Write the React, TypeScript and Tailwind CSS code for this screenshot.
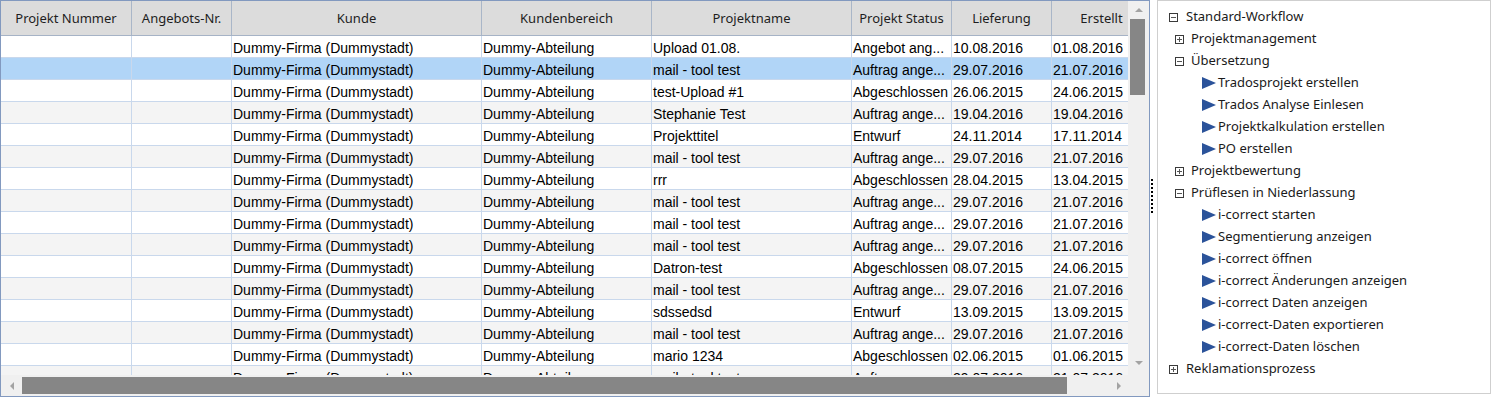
import React from "react";

interface Row {
  name: string;
  status: string;
  lieferung: string;
  erstellt: string;
}

const AT = "Auftrag ange...";

const rows: Row[] = [
  { name: "Upload 01.08.", status: "Angebot ang...", lieferung: "10.08.2016", erstellt: "01.08.2016" },
  { name: "mail - tool test", status: AT, lieferung: "29.07.2016", erstellt: "21.07.2016" },
  { name: "test-Upload #1", status: "Abgeschlossen", lieferung: "26.06.2015", erstellt: "24.06.2015" },
  { name: "Stephanie Test", status: AT, lieferung: "19.04.2016", erstellt: "19.04.2016" },
  { name: "Projekttitel", status: "Entwurf", lieferung: "24.11.2014", erstellt: "17.11.2014" },
  { name: "mail - tool test", status: AT, lieferung: "29.07.2016", erstellt: "21.07.2016" },
  { name: "rrr", status: "Abgeschlossen", lieferung: "28.04.2015", erstellt: "13.04.2015" },
  { name: "mail - tool test", status: AT, lieferung: "29.07.2016", erstellt: "21.07.2016" },
  { name: "mail - tool test", status: AT, lieferung: "29.07.2016", erstellt: "21.07.2016" },
  { name: "mail - tool test", status: AT, lieferung: "29.07.2016", erstellt: "21.07.2016" },
  { name: "Datron-test", status: "Abgeschlossen", lieferung: "08.07.2015", erstellt: "24.06.2015" },
  { name: "mail - tool test", status: AT, lieferung: "29.07.2016", erstellt: "21.07.2016" },
  { name: "sdssedsd", status: "Entwurf", lieferung: "13.09.2015", erstellt: "13.09.2015" },
  { name: "mail - tool test", status: AT, lieferung: "29.07.2016", erstellt: "21.07.2016" },
  { name: "mario 1234", status: "Abgeschlossen", lieferung: "02.06.2015", erstellt: "01.06.2015" },
  { name: "mail - tool test", status: AT, lieferung: "29.07.2016", erstellt: "21.07.2016" },
];

const headers = [
  "Projekt Nummer",
  "Angebots-Nr.",
  "Kunde",
  "Kundenbereich",
  "Projektname",
  "Projekt Status",
  "Lieferung",
  "Erstellt",
];

const cols = "grid grid-cols-[131px_100px_250px_170px_200px_100px_100px_100px]";

type TreeNode =
  | { kind: "box"; level: 0 | 1; open: boolean; label: string }
  | { kind: "step"; label: string };

const tree: TreeNode[] = [
  { kind: "box", level: 0, open: true, label: "Standard-Workflow" },
  { kind: "box", level: 1, open: false, label: "Projektmanagement" },
  { kind: "box", level: 1, open: true, label: "Übersetzung" },
  { kind: "step", label: "Tradosprojekt erstellen" },
  { kind: "step", label: "Trados Analyse Einlesen" },
  { kind: "step", label: "Projektkalkulation erstellen" },
  { kind: "step", label: "PO erstellen" },
  { kind: "box", level: 1, open: false, label: "Projektbewertung" },
  { kind: "box", level: 1, open: true, label: "Prüflesen in Niederlassung" },
  { kind: "step", label: "i-correct starten" },
  { kind: "step", label: "Segmentierung anzeigen" },
  { kind: "step", label: "i-correct öffnen" },
  { kind: "step", label: "i-correct Änderungen anzeigen" },
  { kind: "step", label: "i-correct Daten anzeigen" },
  { kind: "step", label: "i-correct-Daten exportieren" },
  { kind: "step", label: "i-correct-Daten löschen" },
  { kind: "box", level: 0, open: false, label: "Reklamationsprozess" },
];

function ExpandBox({ open }: { open: boolean }) {
  return (
    <div className="relative h-[9px] w-[9px] border border-[#3a3a3a] bg-white">
      <div className="absolute left-[1px] top-[3px] h-px w-[5px] bg-[#555]" />
      {!open && <div className="absolute left-[3px] top-[1px] h-[5px] w-px bg-[#555]" />}
    </div>
  );
}

function Cell({ children, last }: { children?: React.ReactNode; last?: boolean }) {
  return (
    <div
      className={
        "flex items-center overflow-hidden whitespace-nowrap pl-[1px] pt-[3px] " +
        (last ? "" : "border-r border-[#c9d8ec]")
      }
    >
      {children}
    </div>
  );
}

export default function App() {
  return (
    <div className="flex h-[398px] w-[1491px] bg-white">
      {/* grid */}
      <div className="flex h-[397px] w-[1150px] flex-col border border-[#8299bf]">
        <div className="flex h-[374px]">
          <div className="w-[1127px] overflow-hidden">
            <div
              className={cols + " h-[35px] w-max border-b border-[#a6b3c6] bg-[#dcdcdc] text-[13px] text-[#1e1e1e]"}
              style={{ fontFamily: '"Noto Sans", "Open Sans", sans-serif' }}
            >
              {headers.map((h, i) => (
                <div key={i} className="flex items-center justify-center border-r border-[#a9b6c8] pt-[2px]">
                  {h}
                </div>
              ))}
            </div>
            {rows.map((r, i) => (
              <div
                key={i}
                className={
                  cols +
                  " h-[22px] w-max border-b border-[#c9d8ec] text-[14px] text-black " +
                  (i === 1 ? "bg-[#b1d5f7]" : i % 2 === 1 ? "bg-[#f4f4f4]" : "bg-white")
                }
                style={{ fontFamily: '"Liberation Sans", Arial, sans-serif' }}
              >
                <Cell />
                <Cell />
                <Cell>Dummy-Firma (Dummystadt)</Cell>
                <Cell>Dummy-Abteilung</Cell>
                <Cell>{r.name}</Cell>
                <Cell>{r.status}</Cell>
                <Cell>{r.lieferung}</Cell>
                <Cell last>{r.erstellt}</Cell>
              </div>
            ))}
          </div>
          {/* vertical scrollbar */}
          <div className="flex w-[21px] flex-col items-center bg-[#f0f0f0]">
            <div className="flex h-[18px] items-center justify-center">
              <div className="h-0 w-0 border-x-[4px] border-b-[4px] border-x-transparent border-b-[#a3a3a3]" />
            </div>
            <div className="ml-[-3px] h-[76px] w-[15px] bg-[#868686]" />
            <div className="flex-1" />
            <div className="flex h-[14px] items-start justify-center">
              <div className="h-0 w-0 border-x-[4px] border-t-[4px] border-x-transparent border-t-[#a3a3a3]" />
            </div>
          </div>
        </div>
        {/* horizontal scrollbar */}
        <div className="flex h-[21px] items-center bg-[#f0f0f0]">
          <div className="flex w-[21px] justify-center">
            <div className="h-0 w-0 border-y-[4px] border-r-[4px] border-y-transparent border-r-[#a3a3a3]" />
          </div>
          <div className="h-[17px] w-[1045px] bg-[#868686]" />
          <div className="flex w-[58px] justify-end pr-[4px]">
            <div className="h-0 w-0 border-y-[4px] border-l-[4px] border-y-transparent border-l-[#a3a3a3]" />
          </div>
          <div className="h-full flex-1 bg-[#f0f0f0]" />
        </div>
      </div>

      {/* splitter */}
      <div className="flex w-[7px] items-center pl-[1px]">
        <div className="flex flex-col gap-[2px] pb-[6px]">
          {Array.from({ length: 9 }).map((_, i) => (
            <div key={i} className="h-[2px] w-[2px] bg-black" />
          ))}
        </div>
      </div>

      {/* workflow tree */}
      <div
        className="h-[394px] w-[334px] border border-[#cfcfcf] bg-white pt-[5px] text-[13px] text-[#1a1a1a]"
        style={{ fontFamily: '"Noto Sans", "Open Sans", sans-serif' }}
      >
        {tree.map((n, i) =>
          n.kind === "box" ? (
            <div key={i} className={"flex h-[22px] items-center " + (n.level === 0 ? "pl-[11px]" : "pl-[17px]")}>
              <ExpandBox open={n.open} />
              <span className={n.level === 0 ? "ml-[8px]" : "ml-[7px]"}>{n.label}</span>
            </div>
          ) : (
            <div key={i} className="flex h-[22px] items-center pl-[44px]">
              <svg width="14" height="12" viewBox="0 0 14 12" className="shrink-0">
                <polygon points="0,0 14,6 0,12" fill="#2b539a" />
              </svg>
              <span className="ml-[2px]">{n.label}</span>
            </div>
          )
        )}
      </div>
    </div>
  );
}
